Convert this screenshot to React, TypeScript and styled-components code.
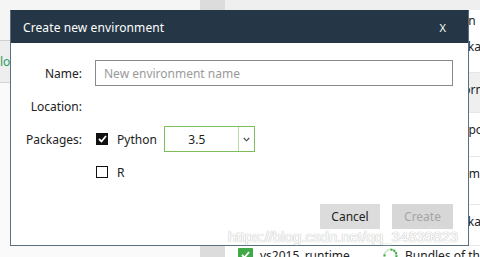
import React from "react";
import styled, { createGlobalStyle } from "styled-components";

const GlobalStyle = createGlobalStyle`
  html, body {
    margin: 0;
    padding: 0;
  }
  body {
    font-family: "Noto Sans", "Open Sans", sans-serif;
    font-size: 12px;
    color: #222;
  }
`;

const Screen = styled.div`
  position: relative;
  width: 480px;
  height: 257px;
  overflow: hidden;
  background: #fff;
`;

// 뒤쪽 네비게이터 화면
const Backdrop = styled.div`
  display: flex;
  width: 100%;
  height: 100%;
`;

const EnvPane = styled.div`
  width: 200px;
  flex: none;
  display: flex;
  flex-flow: column;
  background: #fff;
`;

const EnvToolbar = styled.div`
  height: 40px;
  background: #f5f5f5;
  border-bottom: 1px solid #cfcfcf;
`;

const EnvItem = styled.div`
  height: 41px;
  display: flex;
  align-items: center;
  background: #eeeeee;
  border-bottom: 1px solid #d6d6d6;
  color: #2f9c63;
  white-space: nowrap;
`;

const EnvRest = styled.div`
  flex: 1;
  background: #fafafa;
`;

const Gutter = styled.div`
  width: 25px;
  flex: none;
  background: #dcdcdc;
`;

const Table = styled.div`
  flex: 1;
  display: flex;
  flex-flow: column;
  min-width: 0;
  overflow: hidden;
`;

const TableTop = styled.div`
  height: 10px;
  flex: none;
  background: #efefef;
`;

const TableHead = styled.div`
  height: 20px;
  flex: none;
  display: flex;
  align-items: center;
  padding-left: 186px;
  white-space: nowrap;
  color: #222;
`;

const Row = styled.div<{ $h: number; $shade?: boolean }>`
  height: ${(p) => p.$h}px;
  flex: none;
  box-sizing: border-box;
  display: flex;
  align-items: flex-start;
  padding-top: 8px;
  background: ${(p) => (p.$shade ? "#efefef" : "#fff")};
  border-bottom: 1px solid #e6e6e6;
`;

const LastRow = styled.div`
  height: 18px;
  flex: none;
  display: flex;
  align-items: center;
  white-space: nowrap;
`;

const CheckCell = styled.div`
  width: 35px;
  flex: none;
  box-sizing: border-box;
  padding-left: 13px;
  display: flex;
`;

const NameCell = styled.div`
  width: 123px;
  flex: none;
  white-space: nowrap;
`;

const StatusCell = styled.div`
  width: 22px;
  flex: none;
  display: flex;
`;

const DescCell = styled.div`
  width: 230px;
  flex: none;
  line-height: 17px;
`;

const GreenCheck = styled.span`
  width: 15px;
  height: 15px;
  background: #3faa47;
  border-radius: 1px;
  display: flex;
  align-items: center;
  justify-content: center;
`;

// 다이얼로그
const Dialog = styled.div`
  position: absolute;
  left: 10px;
  top: 10px;
  width: 459px;
  height: 236px;
  box-sizing: border-box;
  border: 1px solid #587181;
  border-top-color: #243746;
  background: #fff;
  display: flex;
  flex-flow: column;
`;

const DialogHeader = styled.div`
  height: 32px;
  flex: none;
  background: #253746;
  color: #fff;
  display: flex;
  align-items: center;
  justify-content: space-between;
  padding: 0 22px 0 12px;
  font-size: 12px;
  letter-spacing: 0.1px;
`;

const CloseMark = styled.span`
  font-size: 11px;
`;

const Form = styled.div`
  display: grid;
  grid-template-columns: 71px 1fr;
  grid-template-rows: 26px 40px 26px 40px;
  column-gap: 13px;
  padding: 17px 15px 0 0;
`;

const Label = styled.div`
  text-align: right;
  align-self: center;
  color: #222;
`;

const NameInput = styled.input`
  height: 26px;
  box-sizing: border-box;
  border: 1px solid #8a8a8a;
  padding: 0 8px;
  font-family: "Noto Sans", "Open Sans", sans-serif;
  font-size: 12px;
  color: #222;
  outline: none;
  &::placeholder {
    color: #9a9a9a;
  }
`;

const PackageLine = styled.div`
  display: flex;
  align-items: center;
`;

const Box = styled.span<{ $checked?: boolean }>`
  width: 12px;
  height: 12px;
  box-sizing: border-box;
  margin-left: 1px;
  margin-right: 9px;
  border: 1.5px solid #111;
  background: ${(p) => (p.$checked ? "#111" : "#fff")};
  display: flex;
  align-items: center;
  justify-content: center;
`;

const PkgName = styled.span`
  color: #222;
`;

const Select = styled.div`
  margin-left: 7px;
  width: 91px;
  height: 26px;
  box-sizing: border-box;
  border: 1px solid #7dbd5b;
  display: flex;
`;

const SelectValue = styled.div`
  flex: 1;
  display: flex;
  align-items: center;
  justify-content: center;
  padding-right: 9px;
`;

const SelectArrow = styled.div`
  width: 15px;
  border-left: 1px solid #b8dca6;
  display: flex;
  align-items: center;
  justify-content: center;
`;

const Footer = styled.div`
  display: flex;
  justify-content: flex-end;
  gap: 12px;
  padding: 12px 15px 0 0;
`;

const Button = styled.button<{ $disabled?: boolean }>`
  width: ${(p) => (p.$disabled ? 61 : 60)}px;
  height: 25px;
  border: none;
  padding: 0;
  background: ${(p) => (p.$disabled ? "#d7d7d7" : "#dcdcdc")};
  color: ${(p) => (p.$disabled ? "#a5a5a5" : "#222")};
  font-family: "Noto Sans", "Open Sans", sans-serif;
  font-size: 12px;
`;

const Watermark = styled.div`
  position: absolute;
  left: 228px;
  top: 229px;
  font-family: "Liberation Sans", Arial, sans-serif;
  font-size: 15px;
  line-height: 15px;
  color: #fff;
  text-shadow: 0 0 1px #b9b9b9, 0 0 1px #b9b9b9;
  white-space: nowrap;
`;

const Tick = ({ color = "#fff" }: { color?: string }) => (
  <svg width="9" height="8" viewBox="0 0 9 8">
    <polyline
      points="1,4 3.5,6.5 8,1"
      fill="none"
      stroke={color}
      strokeWidth="1.8"
    />
  </svg>
);

const Spinner = () => (
  <svg width="15" height="15" viewBox="0 0 15 15">
    <circle cx="7.5" cy="7.5" r="6" fill="none" stroke="#cfe9cf" strokeWidth="2" />
    <path
      d="M7.5 1.5 A6 6 0 1 1 1.8 5.6"
      fill="none"
      stroke="#3faa47"
      strokeWidth="2"
      strokeDasharray="2 1"
    />
  </svg>
);

const rows = [
  { h: 43, shade: false, desc: "Python package manager" },
  { h: 40, shade: true, desc: "Multi-platform module" },
  { h: 44, shade: false, desc: "Python support for portable" },
  { h: 48, shade: false, desc: "Utility to compute puzzles and ka modules" },
  { h: 41, shade: false, desc: "Python package tools" },
];

const App = () => {
  return (
    <Screen>
      <GlobalStyle />
      <Backdrop>
        <EnvPane>
          <EnvToolbar />
          <EnvItem>local</EnvItem>
          <EnvRest />
        </EnvPane>
        <Gutter />
        <Table>
          <TableTop />
          <TableHead>Description</TableHead>
          {rows.map((r, i) => (
            <Row key={i} $h={r.h} $shade={r.shade}>
              <CheckCell />
              <NameCell />
              <StatusCell />
              <DescCell>{r.desc}</DescCell>
            </Row>
          ))}
          <LastRow>
            <CheckCell>
              <GreenCheck>
                <Tick />
              </GreenCheck>
            </CheckCell>
            <NameCell>vs2015_runtime</NameCell>
            <StatusCell>
              <Spinner />
            </StatusCell>
            <DescCell>Bundles of the Visual Studio</DescCell>
          </LastRow>
        </Table>
      </Backdrop>

      <Dialog>
        <DialogHeader>
          <span>Create new environment</span>
          <CloseMark>X</CloseMark>
        </DialogHeader>
        <Form>
          <Label>Name:</Label>
          <NameInput placeholder="New environment name" />
          <Label>Location:</Label>
          <div />
          <Label>Packages:</Label>
          <PackageLine>
            <Box $checked>
              <Tick />
            </Box>
            <PkgName>Python</PkgName>
            <Select>
              <SelectValue>3.5</SelectValue>
              <SelectArrow>
                <svg width="7" height="5" viewBox="0 0 7 5">
                  <polyline
                    points="0.8,1 3.5,3.8 6.2,1"
                    fill="none"
                    stroke="#444"
                    strokeWidth="1.1"
                  />
                </svg>
              </SelectArrow>
            </Select>
          </PackageLine>
          <div />
          <PackageLine>
            <Box />
            <PkgName>R</PkgName>
          </PackageLine>
        </Form>
        <Footer>
          <Button>Cancel</Button>
          <Button $disabled>Create</Button>
        </Footer>
      </Dialog>
      <Watermark>https://blog.csdn.net/qq_34839823</Watermark>
    </Screen>
  );
};

export default App;
